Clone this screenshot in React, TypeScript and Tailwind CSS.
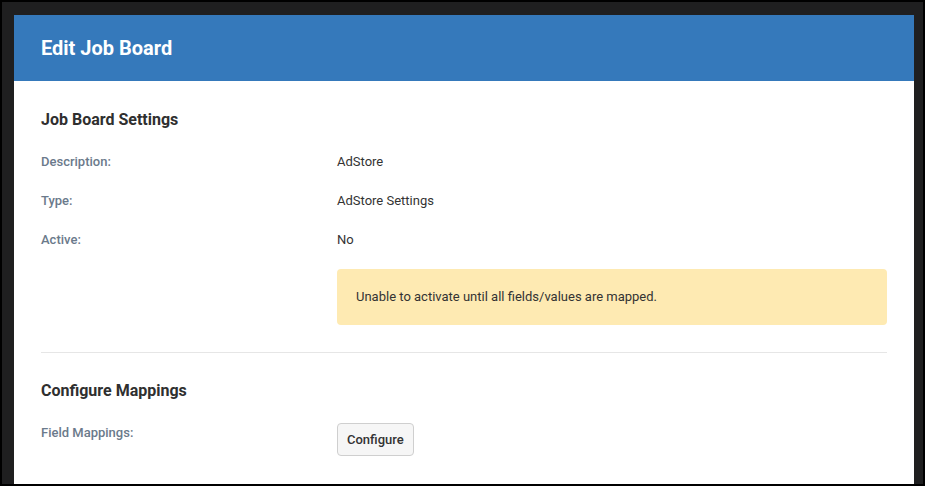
import React from 'react';

type Row = { label: string; value: string };

const settings: Row[] = [
  { label: 'Description:', value: 'AdStore' },
  { label: 'Type:', value: 'AdStore Settings' },
  { label: 'Active:', value: 'No' },
];

const Label: React.FC<{ children: React.ReactNode }> = ({ children }) => (
  <div className="w-[296px] shrink-0 text-[13px] leading-5 font-medium text-[#6b7a8b]">{children}</div>
);

export default function App() {
  return (
    <div
      className="w-[925px] h-[486px] bg-black p-[2px] overflow-hidden"
      style={{ fontFamily: 'Roboto, "Noto Sans", sans-serif' }}
    >
      <div className="h-full bg-[#1f1f20] pl-[12px] pt-[13px] pr-[9px]">
        <div className="h-full bg-white flex flex-col">
          {/* Header */}
          <div className="h-[66px] bg-[#3579bb] flex items-center px-[27px]">
            <h1 className="text-[20px] font-bold text-white">Edit Job Board</h1>
          </div>

          {/* Body */}
          <div className="px-[27px] pt-[27px] text-[#333]">
            <h2 className="text-base leading-6 font-bold text-[#2f2f2f]">Job Board Settings</h2>

            {settings.map((row, i) => (
              <div key={row.label} className={`flex ${i === 0 ? 'mt-[20px]' : 'mt-[19px]'}`}>
                <Label>{row.label}</Label>
                <div className="text-[13px] leading-5 text-[#333]">{row.value}</div>
              </div>
            ))}

            <div className="mt-[19px] ml-[296px] h-[56px] rounded bg-[#feeab2] flex items-center px-[19px] text-[13px] text-[#333]">
              Unable to activate until all fields/values are mapped.
            </div>

            <div className="mt-[27px] h-px bg-[#e6e6e6]" />

            <h2 className="mt-[26px] text-base leading-6 font-bold text-[#2f2f2f]">Configure Mappings</h2>

            <div className="mt-[20px] flex">
              <Label>Field Mappings:</Label>
              <button className="h-[33px] px-[9px] rounded border border-[#cfcfcf] bg-[#f6f6f6] text-[13px] font-medium text-[#333]">
                Configure
              </button>
            </div>
          </div>
        </div>
      </div>
    </div>
  );
}
